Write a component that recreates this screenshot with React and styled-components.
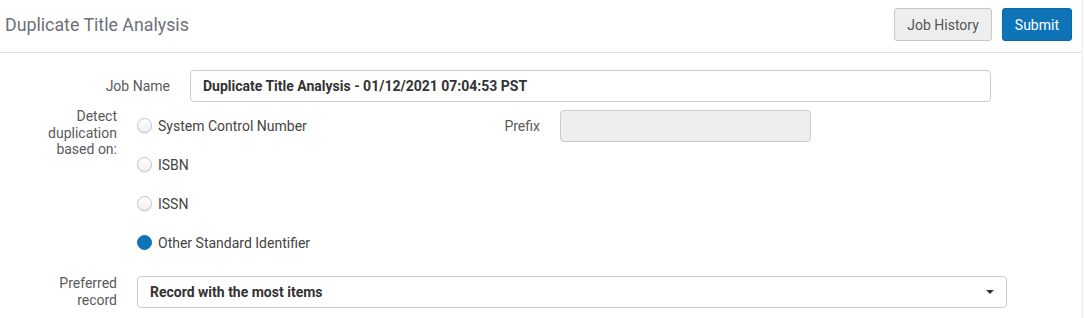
import React from "react";
import styled, { createGlobalStyle } from "styled-components";

const Global = createGlobalStyle`
  html, body { margin: 0; padding: 0; background: #fff; }
  body { font-family: Roboto, "Noto Sans", Arial, sans-serif; }
  * { box-sizing: border-box; }
`;

const Page = styled.div`
  width: 1083px;
  height: 318px;
  border-right: 1px solid #ebebeb;
  overflow: hidden;
`;

const Header = styled.header`
  height: 53px;
  border-bottom: 1px solid #e0e0e0;
  display: flex;
  align-items: center;
  justify-content: space-between;
  padding: 0 10px 0 5px;
`;

const Title = styled.h1`
  margin: 0;
  font-size: 17.8px;
  font-weight: 400;
  color: #6d7079;
  padding-bottom: 3px;
`;

const Actions = styled.div`
  display: flex;
  gap: 10px;
  padding-bottom: 3px;
`;

const Button = styled.button`
  font-family: inherit;
  font-size: 14px;
  height: 33px;
  padding: 0 12px;
  border-radius: 3px;
  border: 1px solid ${(p) => (p.$primary ? "#0b68a6" : "#c8c8c8")};
  background: ${(p) => (p.$primary ? "#0e74b7" : "#eeeeee")};
  color: ${(p) => (p.$primary ? "#fff" : "#555")};
  cursor: pointer;
`;

const Form = styled.div`
  display: flex;
  flex-direction: column;
  padding-top: 17px;
`;

const Row = styled.div`
  display: flex;
  align-items: ${(p) => p.$align || "center"};
  margin-top: ${(p) => p.$mt || 0}px;
`;

const Label = styled.div`
  width: ${(p) => p.$w}px;
  padding-right: 20px;
  text-align: right;
  font-size: 14px;
  line-height: 16.5px;
  color: #5a5a5a;
  padding-top: ${(p) => p.$pt || 0}px;
  flex-shrink: 0;
`;

const TextInput = styled.div`
  width: ${(p) => p.$w}px;
  height: 32px;
  border: 1px solid #cccccc;
  border-radius: 4px;
  background: ${(p) => (p.$disabled ? "#eeeeee" : "#fff")};
  display: flex;
  align-items: center;
  padding: 0 12px;
  font-size: 14px;
  font-weight: 700;
  color: #333;
`;

const Options = styled.div`
  display: flex;
  flex-direction: column;
`;

const Option = styled.div`
  height: 39px;
  display: flex;
  align-items: center;
  font-size: 14px;
  color: #444;
  gap: 6px;
`;

const Radio = styled.span`
  width: 15px;
  height: 15px;
  border-radius: 50%;
  flex-shrink: 0;
  ${(p) =>
    p.$checked
      ? `background: #0e74b7; border: 1px solid #0e74b7;`
      : `background: linear-gradient(#fff, #f0f0f0); border: 1px solid #c4c4c4; box-shadow: 0 1px 1px rgba(0,0,0,0.1);`}
`;

const OptionLine = styled.div`
  display: flex;
  align-items: center;
`;

const OptionText = styled.span`
  width: 305px;
`;

const PrefixGroup = styled.div`
  display: flex;
  align-items: center;
`;

const PrefixLabel = styled.span`
  width: 97px;
  padding-right: 20px;
  text-align: right;
  font-size: 14px;
  color: #5a5a5a;
`;

const Select = styled.div`
  width: 870px;
  height: 32px;
  border: 1px solid #cccccc;
  border-radius: 4px;
  display: flex;
  align-items: center;
  justify-content: space-between;
  padding: 0 12px 0 12px;
  font-size: 14px;
  font-weight: 700;
  color: #333;
`;

const Caret = styled.span`
  width: 0;
  height: 0;
  border-left: 4px solid transparent;
  border-right: 4px solid transparent;
  border-top: 4px solid #333;
`;

export default function App() {
  return (
    <Page>
      <Global />
      <Header>
        <Title>Duplicate Title Analysis</Title>
        <Actions>
          <Button>Job History</Button>
          <Button $primary>Submit</Button>
        </Actions>
      </Header>
      <Form>
        <Row>
          <Label $w={190}>Job Name</Label>
          <TextInput $w={801}>Duplicate Title Analysis - 01/12/2021 07:04:53 PST</TextInput>
        </Row>
        <Row $align="flex-start" $mt={4}>
          <Label $w={137} $pt={2}>
            Detect
            <br />
            duplication
            <br />
            based on:
          </Label>
          <Options>
            <OptionLine>
              <Option>
                <Radio />
                <OptionText>System Control Number</OptionText>
              </Option>
              <PrefixGroup>
                <PrefixLabel>Prefix</PrefixLabel>
                <TextInput $w={251} $disabled />
              </PrefixGroup>
            </OptionLine>
            <Option>
              <Radio />
              ISBN
            </Option>
            <Option>
              <Radio />
              ISSN
            </Option>
            <Option>
              <Radio $checked />
              Other Standard Identifier
            </Option>
          </Options>
        </Row>
        <Row $mt={13}>
          <Label $w={137}>
            Preferred
            <br />
            record
          </Label>
          <Select>
            Record with the most items
            <Caret />
          </Select>
        </Row>
      </Form>
    </Page>
  );
}
